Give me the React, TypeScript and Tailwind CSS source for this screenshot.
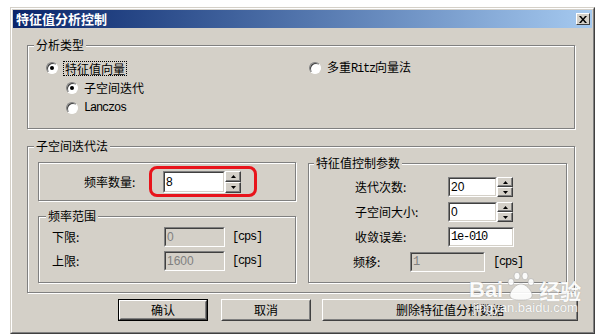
import React from 'react';

const cjk = "font-['Noto_Sans_CJK_SC',sans-serif]";
const mono = "font-['Liberation_Mono',monospace] text-[12px] leading-[14px] tracking-[-1.2px]";

const Radio = ({ checked }: { checked?: boolean }) => (
  <span className="flex h-3 w-3 shrink-0 items-center justify-center rounded-full border border-t-[#808080] border-l-[#808080] border-r-white border-b-white bg-white shadow-[inset_1px_1px_0_#404040]">
    {checked && <span className="h-1 w-1 rounded-full bg-black" />}
  </span>
);

const Field = ({
  value,
  disabled,
  monoText,
  className,
}: {
  value: string;
  disabled?: boolean;
  monoText?: boolean;
  className: string;
}) => (
  <div className={`border border-t-[#808080] border-l-[#808080] border-r-white border-b-white ${className}`}>
    <div
      className={`flex h-full w-full items-center border border-t-[#404040] border-l-[#404040] border-r-[#d4d0c8] border-b-[#d4d0c8] pl-[1px] ${
        disabled ? 'bg-[#d4d0c8] text-[#808080]' : 'bg-white text-black'
      }`}
    >
      <span className={monoText ? mono : "font-['Liberation_Sans',sans-serif] text-[12px] leading-[14px]"}>{value}</span>
    </div>
  </div>
);

const SpinBtn = ({ up }: { up?: boolean }) => (
  <div className="flex flex-1 items-center justify-center border border-t-white border-l-white border-r-[#404040] border-b-[#404040] bg-[#d4d0c8] shadow-[inset_-1px_-1px_0_#808080]">
    <svg width="5" height="3" viewBox="0 0 5 3">
      {up ? <polygon points="2.5,0 5,3 0,3" fill="#000" /> : <polygon points="0,0 5,0 2.5,3" fill="#000" />}
    </svg>
  </div>
);

const Spinner = ({ value, fieldW, h }: { value: string; fieldW: string; h: string }) => (
  <div className={`flex ${h}`}>
    <Field value={value} className={`${fieldW} h-full`} />
    <div className="flex h-full w-[16px] flex-col">
      <SpinBtn up />
      <SpinBtn />
    </div>
  </div>
);

const Button = ({ children, className, isDefault }: { children: React.ReactNode; className: string; isDefault?: boolean }) => (
  <div className={`h-[22px] ${isDefault ? 'border border-black' : ''} ${className}`}>
    <div className="h-full w-full border border-t-white border-l-white border-r-[#404040] border-b-[#404040]">
      <div className="flex h-full w-full items-center justify-center border border-t-[#d4d0c8] border-l-[#d4d0c8] border-r-[#808080] border-b-[#808080] text-[12px] leading-[14px] text-black">
        {children}
      </div>
    </div>
  </div>
);

const groupBorder = 'border border-[#808080] shadow-[1px_1px_0_#fff,inset_1px_1px_0_#fff]';

export default function App() {
  return (
    <div className={`h-[336px] w-[611px] bg-white pl-[10px] pt-[7px] ${cjk}`}>
      <div className="relative h-[327px] w-[585px] border border-[#d4d0c8] border-r-[#404040] border-b-[#404040]">
        <div className="flex h-full w-full flex-col border border-white border-r-[#808080] border-b-[#808080] bg-[#d4d0c8] p-px">
          {/* title bar */}
          <div className="flex h-[18px] shrink-0 items-center justify-between bg-gradient-to-r from-[#0a246a] to-[#a6caf0] pl-[3px] pr-[2px]">
            <span className="text-[13px] font-bold leading-[16px] text-white">特征值分析控制</span>
            <div className="flex h-[12px] w-[14px] items-center justify-center border border-t-white border-l-white border-r-[#404040] border-b-[#404040] bg-[#d4d0c8]">
              <svg width="8" height="7" viewBox="0 0 8 7">
                <path d="M0 0h2l2 2.5 2-2.5h2l-3 3.5 3 3.5h-2l-2-2.5-2 2.5h-2l3-3.5z" fill="#000" />
              </svg>
            </div>
          </div>

          {/* 分析类型 */}
          <fieldset className={`ml-[14px] mt-[10px] h-[91px] w-[548px] ${groupBorder}`}>
            <legend className="ml-[6px] bg-[#d4d0c8] px-[2px] text-[12px] leading-[14px] text-black">分析类型</legend>
            <div className="mt-[6px] flex h-[20px] items-center pl-[18px]">
              <div className="flex w-[263px] items-center">
                <Radio checked />
                <span className="ml-[5px] border border-dotted border-black px-[1px] text-[12px] leading-[13px] text-black">特征值向量</span>
              </div>
              <Radio />
              <span className="ml-[6px] text-[12px] leading-[14px] text-black">
                多重<span className={mono}>Ritz</span>向量法
              </span>
            </div>
            <div className="flex h-[20px] items-center pl-[38px]">
              <Radio checked />
              <span className="ml-[6px] text-[12px] leading-[14px] text-black">子空间迭代</span>
            </div>
            <div className="flex h-[20px] items-center pl-[38px]">
              <Radio />
              <span className={`ml-[6px] text-black ${mono}`}>Lanczos</span>
            </div>
          </fieldset>

          {/* 子空间迭代法 */}
          <fieldset className={`ml-[14px] mt-[10px] h-[154px] w-[548px] ${groupBorder}`}>
            <legend className="ml-[6px] bg-[#d4d0c8] px-[2px] text-[12px] leading-[14px] text-black">子空间迭代法</legend>
            <div className="flex items-start gap-[12px] pl-[10px]">
              {/* left column */}
              <div className="mt-[9px] flex w-[258px] flex-col">
                <div className={`relative flex h-[39px] items-center pl-[45px] ${groupBorder}`}>
                  <span className="w-[79px] text-[12px] leading-[14px] text-black">频率数量:</span>
                  <Spinner value="8" fieldW="w-[62px]" h="h-[22px]" />
                  <div className="absolute left-[110px] top-[3px] h-[31px] w-[108px] rounded-[8px] border-[3px] border-[#e8141b]" />
                </div>
                <fieldset className={`mt-[8px] h-[74px] w-[258px] ${groupBorder}`}>
                  <legend className="ml-[7px] bg-[#d4d0c8] px-[2px] text-[12px] leading-[14px] text-black">频率范围</legend>
                  <div className="mt-[4px] flex flex-col gap-[4px]">
                    {[
                      ['下限:', '0'],
                      ['上限:', '1600'],
                    ].map(([label, v]) => (
                      <div key={label} className="flex h-[20px] items-center pl-[13px]">
                        <span className="w-[112px] text-[12px] leading-[14px] text-black">{label}</span>
                        <Field value={v} disabled className="h-[20px] w-[61px]" />
                        <span className={`ml-[7px] text-black ${mono}`}>[cps]</span>
                      </div>
                    ))}
                  </div>
                </fieldset>
              </div>

              {/* right column */}
              <fieldset className={`mt-[3px] h-[127px] w-[259px] ${groupBorder}`}>
                <legend className="ml-[5px] bg-[#d4d0c8] px-[2px] text-[12px] leading-[14px] text-black">特征值控制参数</legend>
                <div className="mt-[7px] flex flex-col gap-[5px]">
                  <div className="flex h-[20px] items-center pl-[46px]">
                    <span className="w-[93px] text-[12px] leading-[14px] text-black">迭代次数:</span>
                    <Spinner value="20" fieldW="w-[49px]" h="h-[20px]" />
                  </div>
                  <div className="flex h-[20px] items-center pl-[46px]">
                    <span className="w-[93px] text-[12px] leading-[14px] text-black">子空间大小:</span>
                    <Spinner value="0" fieldW="w-[49px]" h="h-[20px]" />
                  </div>
                  <div className="flex h-[20px] items-center pl-[46px]">
                    <span className="w-[93px] text-[12px] leading-[14px] text-black">收敛误差:</span>
                    <Field value="1e-010" monoText className="h-[20px] w-[66px]" />
                  </div>
                  <div className="flex h-[20px] items-center pl-[44px]">
                    <span className="w-[57px] text-[12px] leading-[14px] text-black">频移:</span>
                    <Field value="1" monoText disabled className="h-[20px] w-[75px]" />
                    <span className={`ml-[8px] text-black ${mono}`}>[cps]</span>
                  </div>
                </div>
              </fieldset>
            </div>
          </fieldset>

          {/* buttons */}
          <div className="ml-[105px] mt-[6px] flex">
            <Button isDefault className="w-[90px]">确认</Button>
            <Button className="ml-[13px] w-[90px]">取消</Button>
            <Button className="ml-[11px] w-[256px]">删除特征值分析数据</Button>
          </div>
        </div>

        {/* watermark */}
        <div className="pointer-events-none absolute left-[458px] top-[263px] flex flex-col items-start opacity-90">
          <div className="flex items-end">
            <span className="font-['Liberation_Sans',sans-serif] text-[22px] font-bold leading-[22px] text-white [text-shadow:0_0_1px_#9a9a9a]">Bai</span>
            <svg width="34" height="30" viewBox="0 0 34 30" className="mx-[1px]">
              <g fill="#fff" stroke="#a8a8a8" strokeWidth="0.6">
                <ellipse cx="7" cy="11" rx="3" ry="3.5" />
                <ellipse cx="13" cy="5" rx="3" ry="3.8" />
                <ellipse cx="21" cy="5" rx="3" ry="3.8" />
                <ellipse cx="27" cy="11" rx="3" ry="3.5" />
                <path d="M17 13c-5 0-10 6-11 10-1 5 4 6 11 6s12-1 11-6c-1-4-6-10-11-10z" />
              </g>
            </svg>
            <span className="text-[21px] font-bold leading-[22px] text-white [text-shadow:0_0_1px_#9a9a9a]">经验</span>
          </div>
          <span className="ml-[4px] font-['Liberation_Sans',sans-serif] text-[13px] leading-[14px] text-white [text-shadow:0_0_1px_#9a9a9a]">jingyan.baidu.com</span>
        </div>
      </div>
    </div>
  );
}
